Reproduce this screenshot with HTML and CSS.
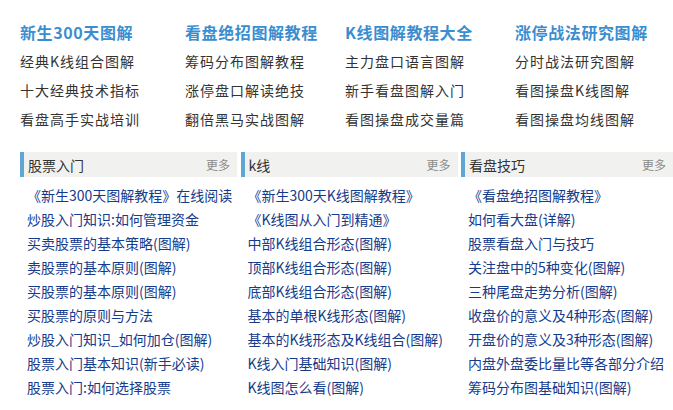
FILE: index.html
```html
<!DOCTYPE html>
<html lang="zh-CN">
<head>
<meta charset="utf-8">
<title>图解教程</title>
<link rel="stylesheet" href="styles.css">
</head>
<body>
<div class="page">
  <div class="top">
    <div class="tcol">
      <div class="thead">新生300天图解</div>
      <div class="trow">经典K线组合图解</div>
      <div class="trow">十大经典技术指标</div>
      <div class="trow">看盘高手实战培训</div>
    </div>
    <div class="tcol">
      <div class="thead">看盘绝招图解教程</div>
      <div class="trow">筹码分布图解教程</div>
      <div class="trow">涨停盘口解读绝技</div>
      <div class="trow">翻倍黑马实战图解</div>
    </div>
    <div class="tcol">
      <div class="thead">K线图解教程大全</div>
      <div class="trow">主力盘口语言图解</div>
      <div class="trow">新手看盘图解入门</div>
      <div class="trow">看图操盘成交量篇</div>
    </div>
    <div class="tcol">
      <div class="thead">涨停战法研究图解</div>
      <div class="trow">分时战法研究图解</div>
      <div class="trow">看图操盘K线图解</div>
      <div class="trow">看图操盘均线图解</div>
    </div>
  </div>
  <div class="panels">
    <div class="panel">
      <div class="phead"><span class="ptitle">股票入门</span><span class="more">更多</span></div>
      <ul class="plist">
        <li>《新生300天图解教程》在线阅读</li>
        <li>炒股入门知识:如何管理资金</li>
        <li>买卖股票的基本策略(图解)</li>
        <li>卖股票的基本原则(图解)</li>
        <li>买股票的基本原则(图解)</li>
        <li>买股票的原则与方法</li>
        <li>炒股入门知识_如何加仓(图解)</li>
        <li>股票入门基本知识(新手必读)</li>
        <li>股票入门:如何选择股票</li>
      </ul>
    </div>
    <div class="panel">
      <div class="phead"><span class="ptitle">k线</span><span class="more">更多</span></div>
      <ul class="plist">
        <li>《新生300天K线图解教程》</li>
        <li>《K线图从入门到精通》</li>
        <li>中部K线组合形态(图解)</li>
        <li>顶部K线组合形态(图解)</li>
        <li>底部K线组合形态(图解)</li>
        <li>基本的单根K线形态(图解)</li>
        <li>基本的K线形态及K线组合(图解)</li>
        <li>K线入门基础知识(图解)</li>
        <li>K线图怎么看(图解)</li>
      </ul>
    </div>
    <div class="panel">
      <div class="phead"><span class="ptitle">看盘技巧</span><span class="more">更多</span></div>
      <ul class="plist">
        <li>《看盘绝招图解教程》</li>
        <li>如何看大盘(详解)</li>
        <li>股票看盘入门与技巧</li>
        <li>关注盘中的5种变化(图解)</li>
        <li>三种尾盘走势分析(图解)</li>
        <li>收盘价的意义及4种形态(图解)</li>
        <li>开盘价的意义及3种形态(图解)</li>
        <li>内盘外盘委比量比等各部分介绍</li>
        <li>筹码分布图基础知识(图解)</li>
      </ul>
    </div>
  </div>
</div>
</body>
</html>
```

FILE: styles.css
```css
html, body {
  margin: 0;
  padding: 0;
  background: #ffffff;
  overflow: hidden;
}
body {
  font-family: "Noto Sans CJK SC", "Liberation Sans", sans-serif;
  font-size: 14px;
  color: #333333;
}
.page {
  width: 673px;
  height: 410px;
  padding: 18px 0 0 20px;
  box-sizing: border-box;
}
.top {
  display: grid;
  grid-template-columns: 165px 160px 170px 158px;
}
.tcol {
  display: flex;
  flex-direction: column;
}
.thead {
  font-size: 16px;
  font-weight: bold;
  color: #3a8ed0;
  line-height: 29px;
  letter-spacing: 0.6px;
  white-space: nowrap;
}
.trow {
  line-height: 29px;
  letter-spacing: 1px;
  color: #333333;
  white-space: nowrap;
}
.panels {
  margin-top: 18px;
  display: grid;
  grid-template-columns: 217px 217px 212px;
  column-gap: 3.5px;
}
.phead {
  height: 25px;
  background: #f1f2ef;
  border-left: 4px solid #5fa6d2;
  display: flex;
  justify-content: space-between;
  align-items: center;
  padding: 0 7px 0 4px;
}
.ptitle {
  font-size: 14px;
  color: #333333;
}
.more {
  font-size: 12px;
  color: #8a8a8a;
}
.plist {
  list-style: none;
  margin: 6px 0 0 0;
  padding: 0 0 0 7px;
}
.plist li {
  line-height: 24px;
  color: #153b8c;
  white-space: nowrap;
}
```
